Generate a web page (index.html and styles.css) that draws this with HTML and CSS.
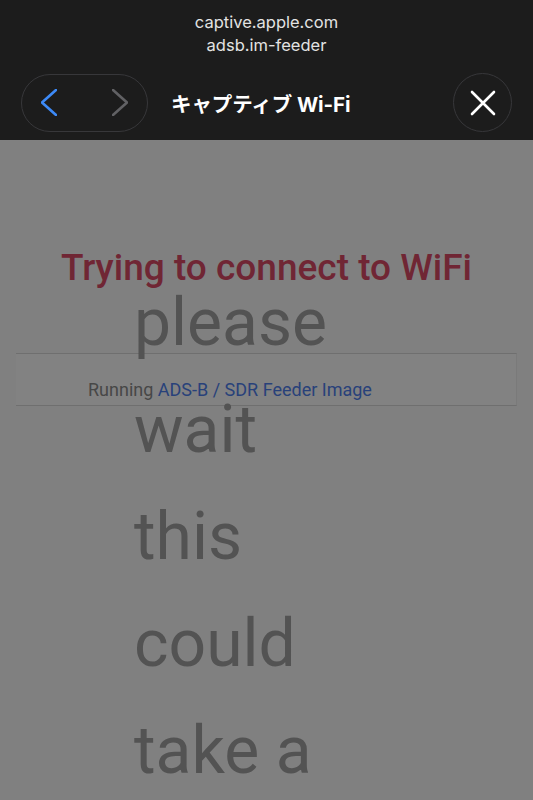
FILE: index.html
```html
<!DOCTYPE html>
<html lang="ja">
<head>
<meta charset="utf-8">
<title>キャプティブ Wi-Fi</title>
<link rel="stylesheet" href="styles.css">
</head>
<body>
<header class="sheet-header">
  <div class="domains">
    <div class="domain">captive.apple.com</div>
    <div class="domain">adsb.im-feeder</div>
  </div>
  <div class="nav-row">
    <div class="nav-pill">
      <svg class="chev" width="16" height="27" viewBox="0 0 16 27"><polyline points="15,1 1,13.5 15,26" fill="none" stroke="#3d8af7" stroke-width="2.6" stroke-linecap="round" stroke-linejoin="round"/></svg>
      <svg class="chev" width="16" height="27" viewBox="0 0 16 27"><polyline points="1,1 15,13.5 1,26" fill="none" stroke="#616164" stroke-width="2.6" stroke-linecap="round" stroke-linejoin="round"/></svg>
    </div>
    <div class="nav-title">キャプティブ Wi-Fi</div>
    <div class="close-btn">
      <svg width="26" height="26" viewBox="0 0 26 26"><path d="M2 2 L24 24 M24 2 L2 24" fill="none" stroke="#ffffff" stroke-width="2.6" stroke-linecap="round"/></svg>
    </div>
  </div>
</header>
<main class="page">
  <h1 class="title">Trying to connect to WiFi</h1>
  <footer class="feeder-bar">
    <span class="running">Running <a class="link">ADS-B / SDR Feeder Image</a></span>
  </footer>
  <div class="wait-overlay">please wait this could take a few minutes</div>
</main>
</body>
</html>
```
FILE: styles.css
```css
html, body {
  margin: 0;
  padding: 0;
  background: #808080;
}
body {
  font-family: "Roboto", "Noto Sans", sans-serif;
  min-height: 800px;
  overflow: hidden;
}
.sheet-header {
  background: #1c1c1c;
  height: 140px;
  box-sizing: border-box;
  padding-top: 11px;
}
.domains {
  text-align: center;
  font-family: "Inter", "Noto Sans CJK JP", sans-serif;
  font-size: 16.5px;
  line-height: 22.5px;
  color: #e3e3e3;
}
.nav-row {
  display: flex;
  align-items: center;
  margin-top: 17px;
  padding: 0 21px;
}
.nav-pill {
  width: 127px;
  height: 58px;
  box-sizing: border-box;
  border: 1.5px solid #37373a;
  border-radius: 29px;
  display: flex;
  align-items: center;
  justify-content: space-between;
  padding: 0 19px 0 19px;
}
.chev { display: block; }
.nav-title {
  flex: 1;
  padding-left: 23px;
  font-family: "Inter", "Noto Sans CJK JP", sans-serif;
  font-weight: 700;
  font-size: 20.5px;
  color: #ffffff;
  letter-spacing: -0.1px;
}
.close-btn {
  width: 59px;
  height: 59px;
  box-sizing: border-box;
  border: 1.5px solid #37373a;
  border-radius: 50%;
  display: flex;
  align-items: center;
  justify-content: center;
}
.page {
  position: relative;
  padding-top: 106px;
}
.title {
  margin: 0;
  text-align: center;
  font-family: "Roboto", sans-serif;
  font-weight: 500;
  font-size: 37px;
  line-height: 44px;
  color: #702634;
}
.feeder-bar {
  margin: 63px 16px 0;
  height: 53px;
  box-sizing: border-box;
  background: #828282;
  border-top: 1px solid #6f6f6f;
  border-bottom: 1px solid #6f6f6f;
  border-right: 1px solid #7a7a7a;
  padding: 25px 0 0 72px;
  font-size: 18px;
  line-height: 21px;
}
.running { color: #474747; }
.link { color: #28417a; }
.wait-overlay {
  position: absolute;
  left: 134px;
  top: 129px;
  width: 210px;
  font-size: 66px;
  line-height: 107px;
  color: #535353;
}
```
